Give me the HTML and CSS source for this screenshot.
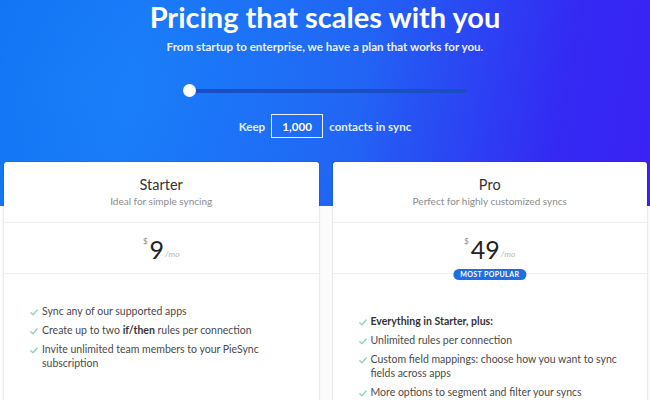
FILE: index.html
```html
<!DOCTYPE html>
<html lang="en">
<head>
<meta charset="utf-8">
<title>Pricing</title>
<link rel="stylesheet" href="styles.css">
</head>
<body>
<div class="hero">
  <h1 class="hero-title">Pricing that scales with you</h1>
  <p class="hero-sub">From startup to enterprise, we have a plan that works for you.</p>
  <div class="slider"><div class="slider-track"></div><span class="slider-thumb"></span></div>
  <div class="keep"><span>Keep</span><span class="keep-box">1,000</span><span>contacts in sync</span></div>
</div>
<div class="plans">
  <section class="plan">
    <header class="plan-head">
      <h2 class="plan-name">Starter</h2>
      <p class="plan-desc">Ideal for simple syncing</p>
    </header>
    <div class="plan-price"><span class="cur">$</span><span class="amount">9</span><span class="per">/mo</span></div>
    <ul class="features">
      <li><svg class="check" viewBox="0 0 8 7" width="8" height="7"><polyline points="0.8,3.8 3,5.8 7.2,1" /></svg><span>Sync any of our supported apps</span></li>
      <li><svg class="check" viewBox="0 0 8 7" width="8" height="7"><polyline points="0.8,3.8 3,5.8 7.2,1" /></svg><span>Create up to two <b>if/then</b> rules per connection</span></li>
      <li><svg class="check" viewBox="0 0 8 7" width="8" height="7"><polyline points="0.8,3.8 3,5.8 7.2,1" /></svg><span>Invite unlimited team members to your PieSync subscription</span></li>
    </ul>
  </section>
  <section class="plan">
    <header class="plan-head">
      <h2 class="plan-name">Pro</h2>
      <p class="plan-desc">Perfect for highly customized syncs</p>
    </header>
    <div class="plan-price"><span class="cur">$</span><span class="amount">49</span><span class="per">/mo</span><span class="badge">MOST POPULAR</span></div>
    <ul class="features features-pro">
      <li><svg class="check" viewBox="0 0 8 7" width="8" height="7"><polyline points="0.8,3.8 3,5.8 7.2,1" /></svg><span><b>Everything in Starter, plus:</b></span></li>
      <li><svg class="check" viewBox="0 0 8 7" width="8" height="7"><polyline points="0.8,3.8 3,5.8 7.2,1" /></svg><span>Unlimited rules per connection</span></li>
      <li><svg class="check" viewBox="0 0 8 7" width="8" height="7"><polyline points="0.8,3.8 3,5.8 7.2,1" /></svg><span>Custom field mappings: choose how you want to sync fields across apps</span></li>
      <li><svg class="check" viewBox="0 0 8 7" width="8" height="7"><polyline points="0.8,3.8 3,5.8 7.2,1" /></svg><span>More options to segment and filter your syncs</span></li>
    </ul>
  </section>
</div>
</body>
</html>
```

FILE: styles.css
```css
html, body {
  margin: 0;
  padding: 0;
  height: 400px;
  overflow: hidden;
}
body {
  font-family: Lato, "Open Sans", "Liberation Sans", sans-serif;
  background: #fcfcfd;
  color: #444;
}
.hero {
  height: 206px;
  background:
    radial-gradient(ellipse 320px 220px at 90px 90px, rgba(30,140,255,0.35), rgba(30,140,255,0) 100%),
    linear-gradient(100deg, #0f70f1 0%, #1877f6 22%, #2262f4 55%, #3429f3 85%, #3a22f4 100%);
  color: #fff;
  text-align: center;
  overflow: hidden;
}
.hero-title {
  margin: 0;
  font-size: 29px;
  line-height: 34px;
  font-weight: 700;
}
.hero-sub {
  margin: 5px 0 0;
  font-size: 11.6px;
  line-height: 15px;
  font-weight: 700;
  color: #e9f0ff;
}
.slider {
  position: relative;
  width: 284px;
  height: 13px;
  margin: 30px auto 0;
  display: flex;
  align-items: center;
}
.slider-track {
  flex: 1;
  height: 4px;
  border-radius: 2px;
  background: #1a4fc4;
}
.slider-thumb {
  position: absolute;
  left: 0;
  top: 0;
  width: 13px;
  height: 13px;
  border-radius: 50%;
  background: #fff;
}
.keep {
  margin-top: 17px;
  display: flex;
  justify-content: center;
  align-items: center;
  gap: 6px;
  font-size: 11.6px;
  font-weight: 700;
  color: #e3edff;
}
.keep-box {
  width: 50px;
  height: 22px;
  border: 1px solid #e8f0ff;
  display: flex;
  align-items: center;
  justify-content: center;
  color: #fff;
}
.plans {
  margin-top: -44px;
  padding: 0 3px 0 4px;
  display: grid;
  grid-template-columns: 1fr 1fr;
  gap: 14px;
}
.plan {
  background: #fff;
  border-radius: 3px;
  box-shadow: 0 0 0 1px rgba(0,0,0,0.04), 0 1px 3px rgba(0,0,0,0.08);
  height: 300px;
}
.plan-head {
  padding: 14px 0 14px;
  text-align: center;
  border-bottom: 1px solid #f0f0f0;
}
.plan-name {
  margin: 0;
  font-size: 14.5px;
  line-height: 18px;
  font-weight: 400;
  color: #333;
}
.plan-desc {
  margin: 0;
  font-size: 10px;
  line-height: 14px;
  color: #8c8c8c;
}
.plan-price {
  position: relative;
  height: 50px;
  display: flex;
  justify-content: center;
  align-items: center;
  border-bottom: 1px solid #f0f0f0;
  color: #222;
}
.cur {
  font-size: 8px;
  color: #888;
  align-self: flex-start;
  margin-top: 13px;
  margin-right: 2px;
}
.amount {
  font-size: 25px;
  line-height: 28px;
  font-weight: 400;
  margin-top: 2px;
}
.per {
  font-size: 8.5px;
  color: #b4b4b4;
  font-style: italic;
  align-self: flex-end;
  margin-bottom: 14px;
  margin-left: 1px;
}
.badge {
  position: absolute;
  left: 50%;
  bottom: -7px;
  transform: translateX(-50%);
  background: #1e6fe0;
  color: #fff;
  font-size: 7px;
  font-weight: 700;
  letter-spacing: 0.4px;
  line-height: 11px;
  padding: 0 7px;
  border-radius: 6px;
  white-space: nowrap;
}
.features {
  list-style: none;
  margin: 0;
  padding: 31px 24px 0 26px;
  font-size: 10.5px;
  line-height: 13.5px;
  color: #4a4a4a;
}
.features-pro {
  padding-top: 41px;
}
.features li {
  display: flex;
  align-items: flex-start;
  gap: 4px;
  margin-bottom: 5.5px;
}
.features b {
  font-weight: 700;
  color: #333;
}
.check {
  flex: none;
  margin-top: 4px;
  fill: none;
  stroke: #8fd2b6;
  stroke-width: 1.3;
  stroke-linecap: round;
  stroke-linejoin: round;
}
```
